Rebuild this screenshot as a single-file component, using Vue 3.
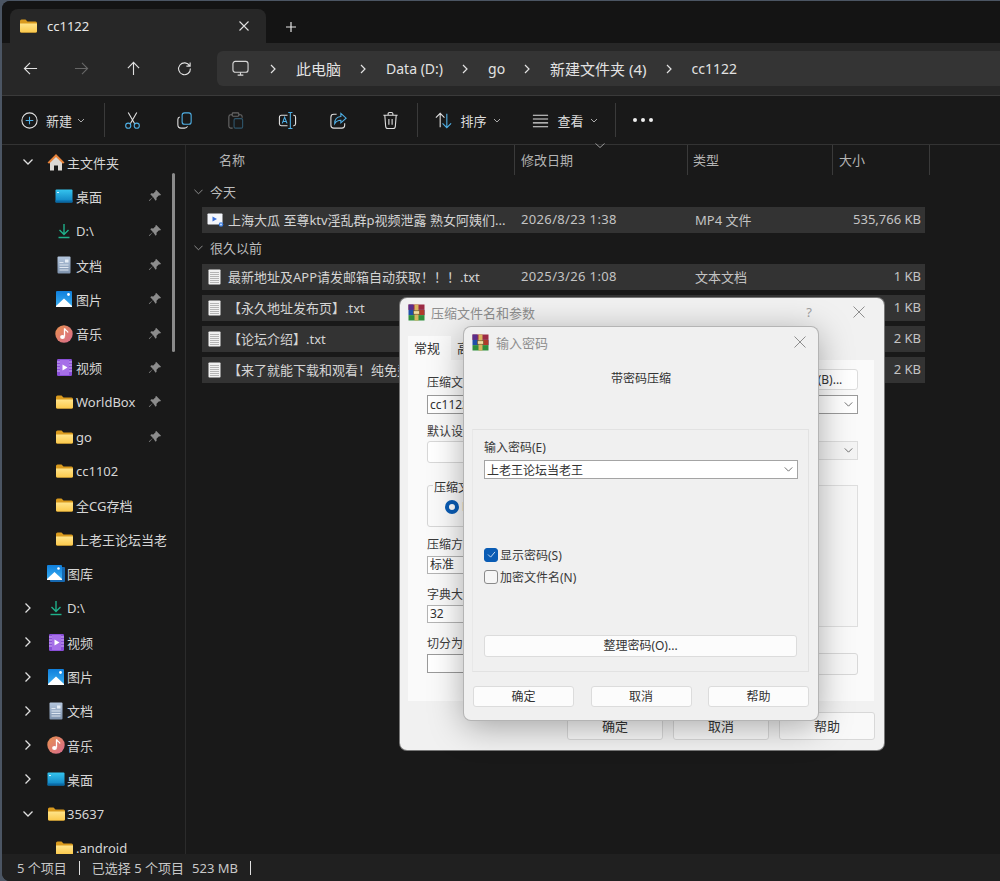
<template>
  <svg class="sprite" aria-hidden="true">
    <defs>
      <linearGradient id="gDesk" x1="0" y1="0" x2="0" y2="1"><stop offset="0" stop-color="#35c4ee" /><stop offset="1" stop-color="#0d7fc0" /></linearGradient>
      <linearGradient id="gDoc" x1="0" y1="0" x2="0" y2="1"><stop offset="0" stop-color="#b4c6de" /><stop offset="1" stop-color="#7f93ad" /></linearGradient>
      <linearGradient id="gPic" x1="0" y1="0" x2="0" y2="1"><stop offset="0" stop-color="#0f7fdc" /><stop offset="1" stop-color="#3cb0f2" /></linearGradient>
      <linearGradient id="gMusic" x1="0" y1="0" x2="1" y2="1"><stop offset="0" stop-color="#e8914e" /><stop offset="1" stop-color="#d76a8e" /></linearGradient>
      <linearGradient id="gFolder" x1="0" y1="0" x2="0" y2="1"><stop offset="0" stop-color="#ffe48a" /><stop offset="1" stop-color="#fbc94c" /></linearGradient>
    </defs>
    <symbol id="i-folder" viewBox="0 0 17 14">
      <path d="M0 2a1.5 1.5 0 0 1 1.5-1.5h4L7.5 2.500h8A1.500 1.500 0 0 1 17 4v8a1.500 1.500 0 0 1-1.500 1.500h-14A1.500 1.500 0 0 1 0 12z" fill="#d99a1e" />
      <path d="M0 4.500h17V12a1.500 1.500 0 0 1-1.500 1.500h-14A1.500 1.500 0 0 1 0 12z" fill="url(#gFolder)" />
    </symbol>
    <symbol id="i-home" viewBox="0 0 18 18">
      <path d="M3 8.500L9 3l6 5.500V17.500h-4v-5H7v5H3z" fill="#dcd9d5" />
      <path d="M0.500 9.500L9 1l8.500 8.500-1.600 1.200L9 3.900 2.100 10.700z" fill="#e8833a" />
    </symbol>
    <symbol id="i-desktop" viewBox="0 0 18 14">
      <rect x="0.500" y="0.500" width="17" height="13" rx="1" fill="url(#gDesk)" />
      <rect x="2" y="3" width="2" height="1" fill="#d5f3ff" />
      <rect x="0.500" y="11.500" width="17" height="2" fill="#0b6aa6" />
    </symbol>
    <symbol id="i-down" viewBox="0 0 16 16">
      <path d="M8 1v10M3.500 7L8 11.500 12.500 7" fill="none" stroke="#1fb08a" stroke-width="1.400" />
      <path d="M2.500 14.500h11" stroke="#1fb08a" stroke-width="1.400" />
    </symbol>
    <symbol id="i-doc" viewBox="0 0 14 18">
      <rect x="0.500" y="0.500" width="13" height="17" rx="1" fill="url(#gDoc)" />
      <path d="M2.500 9h9M2.500 11.500h9M2.500 14h9M2.500 6.500h4" stroke="#e6edf6" stroke-width="0.900" />
      <rect x="8" y="3.500" width="3.500" height="3" fill="#e6edf6" />
    </symbol>
    <symbol id="i-pic" viewBox="0 0 16 16">
      <rect width="16" height="16" rx="1" fill="url(#gPic)" />
      <path d="M0 15l8-7.500 8 7.500v1H0z" fill="#fff" />
      <circle cx="12.500" cy="3.500" r="1.400" fill="#fff" />
    </symbol>
    <symbol id="i-lib" viewBox="0 0 18 17">
      <rect x="3" y="2" width="15" height="15" rx="1" fill="#1668b0" />
      <rect x="0" y="0" width="15" height="15" rx="1" fill="url(#gPic)" />
      <path d="M0 14l7.500-7 7.500 7v1H0z" fill="#fff" />
      <circle cx="11.500" cy="3.500" r="1.300" fill="#fff" />
    </symbol>
    <symbol id="i-music" viewBox="0 0 18 18">
      <circle cx="9" cy="9" r="8.700" fill="url(#gMusic)" />
      <path d="M9.500 3.500v8" stroke="#fff" stroke-width="1.300" />
      <path d="M9.500 3.500c.5 2 3 2 3.500 4" fill="none" stroke="#fff" stroke-width="1.300" />
      <ellipse cx="7.500" cy="12" rx="2.400" ry="2" fill="#fff" />
    </symbol>
    <symbol id="i-video" viewBox="0 0 15 17">
      <rect width="15" height="17" rx="1.200" fill="#8a4fd8" />
      <rect x="3" y="1" width="9" height="15" fill="#a66fe8" />
      <path d="M0 3h3M0 6h3M0 9h3M0 12h3M12 3h3M12 6h3M12 9h3M12 12h3" stroke="#d9c2f6" stroke-width="0.900" />
      <path d="M5.500 5.500v6l5-3z" fill="#fff" />
    </symbol>
    <symbol id="i-pin" viewBox="0 0 14 14">
      <path d="M8.300 1l4.700 4.700-1 .8-1-.3-2.500 2.500.1 2-1 1L5 8.100l-3.500 4-.7-.7L4.900 8 2.300 5.300l1-1 2 .1 2.500-2.500-.3-1z" fill="#8c8c8c" />
    </symbol>
    <symbol id="i-txt" viewBox="0 0 13 16">
      <rect x="0.500" y="0.500" width="12" height="15" rx="0.800" fill="#f1f1f1" />
      <path d="M2 3.500h9M2 5.500h9M2 7.500h9M2 9.500h9M2 11.500h9M2 13.500h9" stroke="#a6a6a6" stroke-width="0.800" />
    </symbol>
    <symbol id="i-mp4" viewBox="0 0 17 14">
      <rect x="0.500" y="0.500" width="15" height="11" rx="0.800" fill="#f4f6fb" />
      <path d="M5.500 3.500v5l4.500-2.500z" fill="#3a6fd8" />
      <circle cx="14" cy="11.500" r="2.300" fill="#3f7fe0" />
      <circle cx="14" cy="11.500" r="1" fill="#cfe0fb" />
    </symbol>
    <symbol id="i-rar" viewBox="0 0 17 17">
      <rect x="0.500" y="0.500" width="16" height="5.400" fill="#9c2b45" />
      <rect x="0.500" y="0.500" width="5" height="5.400" fill="#5a2f8c" />
      <rect x="0.500" y="5.900" width="16" height="5.200" fill="#1f4fa8" />
      <rect x="11" y="5.900" width="5.500" height="5.200" fill="#b03a2a" />
      <rect x="0.500" y="11.100" width="16" height="5.400" fill="#2f8f3c" />
      <rect x="6.500" y="0.500" width="4" height="16" fill="#d8b45e" />
      <rect x="5.500" y="6.800" width="6" height="3.400" fill="#f0dca0" stroke="#6b4a1a" stroke-width="0.600" />
    </symbol>
  </svg>

  <div class="window">
    <div class="tabbar">
      <div class="tab">
        <svg class="tab-folder"><use href="#i-folder" /></svg>
        <span class="tab-title">cc1122</span>
        <svg class="tab-close" viewBox="0 0 10 10"><path d="M.5.500l9 9M9.500.500l-9 9" /></svg>
      </div>
      <svg class="tab-plus" viewBox="0 0 10 10"><path d="M5 0v10M0 5h10" /></svg>
    </div>

    <div class="navbar">
      <div class="nav-btns">
        <svg class="nav-icon" viewBox="0 0 16 16"><path d="M15 8H1.500M7.500 2l-6 6 6 6" /></svg>
        <svg class="nav-icon dim" viewBox="0 0 16 16"><path d="M1 8h13.500M8.500 2l6 6-6 6" /></svg>
        <svg class="nav-icon" viewBox="0 0 16 16"><path d="M8 15V1.500M2 7.500l6-6 6 6" /></svg>
        <svg class="nav-icon" viewBox="0 0 16 16"><path d="M13.500 5.200A6.300 6.300 0 1 0 14.300 8M14 1.500v4h-4" /></svg>
      </div>
      <div class="address">
        <svg class="pc-icon" viewBox="0 0 18 18"><rect x="1" y="1.500" width="16" height="11.500" rx="2.500" /><path d="M6 16h6M9 13v3" /></svg>
        <template v-for="crumb in crumbs" :key="crumb.text">
          <svg class="crumb-chev" viewBox="0 0 6 10"><path d="M1 1l4 4-4 4" /></svg>
          <span class="crumb" :class="{ latin: crumb.latin }">{{ crumb.text }}</span>
        </template>
      </div>
    </div>

    <div class="toolbar">
      <div class="tool-new">
        <svg class="tool-icon" viewBox="0 0 20 20"><circle cx="10" cy="10" r="8" /><path class="blue" d="M10 6v8M6 10h8" /></svg>
        <span>新建</span>
        <svg class="caret" viewBox="0 0 8 5"><path d="M1 1l3 3 3-3" /></svg>
      </div>
      <i class="tool-sep"></i>
      <div class="tool-btn first">
        <svg class="tool-icon" viewBox="0 0 20 20"><path d="M5.500 1.500l6.800 12M14.500 1.500l-6.800 12" /><circle class="blue" cx="5.500" cy="15.500" r="2.700" /><circle class="blue" cx="14.500" cy="15.500" r="2.700" /></svg>
      </div>
      <div class="tool-btn">
        <svg class="tool-icon" viewBox="0 0 20 20"><rect class="blue" x="7.500" y="2" width="9.500" height="12" rx="2.500" /><path d="M5 6.300C3.700 6.700 3 7.600 3 9v5.500C3 16.500 4.200 18 6.500 18H10c1.500 0 2.700-.7 3.200-1.800" /></svg>
      </div>
      <div class="tool-btn faded">
        <svg class="tool-icon" viewBox="0 0 20 20"><path d="M6.500 4H5C3.800 4 3 4.800 3 6v10c0 1.200.8 2 2 2h2M13.500 4H15c1.200 0 2 .8 2 2v1" /><rect x="6.500" y="2" width="7" height="3.500" rx="1" /><rect class="blue" x="8.500" y="8" width="9" height="10" rx="1.500" /></svg>
      </div>
      <div class="tool-btn">
        <svg class="tool-icon" viewBox="0 0 20 20"><path d="M10 4.500H3.500C2.200 4.500 1.500 5.200 1.500 6.500v7c0 1.300.7 2 2 2H10M16 4.500h.5c1.300 0 2 .7 2 2v7c0 1.300-.7 2-2 2H16" /><path class="blue" d="M4.500 13l2.500-6.500L9.500 13M5.300 11h3.400M13 1.500v17M10.800 1.500h4.400M10.800 18.500h4.400" /></svg>
      </div>
      <div class="tool-btn">
        <svg class="tool-icon" viewBox="0 0 20 20"><path d="M8 3.500H5C3 3.500 2 4.500 2 6.500V15c0 2 1 3 3 3h8.500c2 0 3-1 3-3v-2" /><path class="blue" d="M12.500 2.500L18 7.500l-5.500 5V9.800c-3 0-5 1-6.500 3.500 0-4.500 2.500-7.200 6.500-7.500z" /></svg>
      </div>
      <div class="tool-btn">
        <svg class="tool-icon" viewBox="0 0 20 20"><path d="M2.500 4.500h15M7.500 4.500V3c0-.8.500-1.500 1.500-1.500h2c1 0 1.500.7 1.500 1.500v1.500M4 4.500l.9 11.500c.1 1.500 1 2.500 2.500 2.500h5.200c1.500 0 2.400-1 2.500-2.500L16 4.500M8.300 8.500v6M11.700 8.500v6" /></svg>
      </div>
      <i class="tool-sep second"></i>
      <div class="tool-drop sort">
        <svg class="tool-icon" viewBox="0 0 20 20"><path d="M6.500 17V2.500M2 7l4.500-4.500L11 7" /><path class="blue" d="M13.500 3v14.500M9 13l4.500 4.500L18 13" /></svg>
        <span>排序</span>
        <svg class="caret" viewBox="0 0 8 5"><path d="M1 1l3 3 3-3" /></svg>
      </div>
      <div class="tool-drop view">
        <svg class="tool-icon" viewBox="0 0 20 20"><path d="M2 4.500h16M2 8.500h16M2 12.500h16M2 16.500h16" /></svg>
        <span>查看</span>
        <svg class="caret" viewBox="0 0 8 5"><path d="M1 1l3 3 3-3" /></svg>
      </div>
      <i class="tool-sep third"></i>
      <div class="dots"><i></i><i></i><i></i></div>
    </div>

    <div class="main">
      <aside class="sidebar">
        <div v-for="item in sideItems" :key="item.id" class="side-row" :class="{ child: item.child }">
          <span class="chev-box">
            <svg v-if="item.chev" class="side-chev" :class="item.chev" viewBox="0 0 12 12"><path :d="item.chev === 'open' ? 'M1.500 3.500L6 8l4.500-4.500' : 'M3.500 1.500L8 6l-4.500 4.500'" /></svg>
          </span>
          <span class="side-icon"><svg :style="{ width: item.w + 'px', height: item.h + 'px' }"><use :href="'#i-' + item.icon" /></svg></span>
          <span class="side-text">{{ item.name }}</span>
          <svg v-if="item.pin" class="pin"><use href="#i-pin" /></svg>
        </div>
        <div class="side-scroll"></div>
      </aside>

      <section class="files">
        <div class="col-head">
          <span class="col name-col">名称</span>
          <span class="col date-col">修改日期<svg class="sort-mark" viewBox="0 0 10 5"><path d="M.5.500L5 4.500 9.500.500" /></svg></span>
          <span class="col type-col">类型</span>
          <span class="col size-col">大小</span>
        </div>

        <div class="group-title first">
          <svg viewBox="0 0 10 6"><path d="M.5.500L5 5 9.500.500" /></svg>今天
        </div>
        <div class="file-row">
          <svg class="file-icon mp4"><use href="#i-mp4" /></svg>
          <span class="file-name">上海大瓜 至尊ktv淫乱群p视频泄露 熟女阿姨们...</span>
          <span class="file-date">2026/8/23 1:38</span>
          <span>MP4 文件</span>
          <span class="file-size">535,766 KB</span>
        </div>

        <div class="group-title">
          <svg viewBox="0 0 10 6"><path d="M.5.500L5 5 9.500.500" /></svg>很久以前
        </div>
        <div v-for="f in oldFiles" :key="f.name" class="file-row">
          <svg class="file-icon"><use href="#i-txt" /></svg>
          <span class="file-name">{{ f.name }}</span>
          <span class="file-date">{{ f.date }}</span>
          <span>{{ f.type }}</span>
          <span class="file-size">{{ f.size }}</span>
        </div>
      </section>
    </div>

    <div class="statusbar">
      <span>5 个项目</span>
      <i class="status-sep"></i>
      <span>已选择 5 个项目</span>
      <span class="status-size">523 MB</span>
      <i class="status-sep last"></i>
    </div>
  </div>

  <!-- 压缩文件名和参数 -->
  <div class="dialog dlg-back">
    <div class="dlg-title">
      <svg class="rar"><use href="#i-rar" /></svg>
      <span>压缩文件名和参数</span>
      <span class="help">?</span>
      <svg class="dlg-close" viewBox="0 0 12 12"><path d="M.5.500l11 11M11.500.500l-11 11" /></svg>
    </div>
    <div class="back-tabs">
      <span class="back-tab active">常规</span>
      <span class="back-tab">高级</span>
    </div>
    <div class="back-panel">
      <div class="back-left">
        <div class="lbl">压缩文件名(A)</div>
        <div class="field name-field">cc1122.rar</div>
        <div class="lbl gap-default">默认设置</div>
        <div class="soft-btn"></div>
        <div class="group-box">
          <span class="legend">压缩文件格式</span>
          <span class="radio"></span><span class="radio-text">RAR</span>
        </div>
        <div class="lbl gap-method">压缩方式(M)</div>
        <div class="field small-field">标准</div>
        <div class="lbl gap-dict">字典大小(I)</div>
        <div class="field small-field">32</div>
        <div class="lbl gap-dict">切分为分卷(V)</div>
        <div class="field split-field"></div>
      </div>
      <div class="back-right">
        <div class="browse">浏览(B)...</div>
        <div class="right-select strong">
          <svg class="sel-chev" viewBox="0 0 10 6"><path d="M.5.500L5 5 9.500.500" /></svg>
        </div>
        <div class="right-select second">
          <svg class="sel-chev" viewBox="0 0 10 6"><path d="M.5.500L5 5 9.500.500" /></svg>
        </div>
        <div class="opt-box"></div>
        <div class="bottom-box"></div>
      </div>
    </div>
    <div class="back-footer">
      <span class="back-btn">确定</span>
      <span class="back-btn">取消</span>
      <span class="back-btn">帮助</span>
    </div>
  </div>

  <!-- 输入密码 -->
  <div class="dialog dlg-front">
    <div class="dlg-title front-title">
      <svg class="rar"><use href="#i-rar" /></svg>
      <span>输入密码</span>
      <svg class="dlg-close" viewBox="0 0 12 12"><path d="M.5.500l11 11M11.500.500l-11 11" /></svg>
    </div>
    <div class="profile-name">带密码压缩</div>
    <div class="pwd-panel">
      <div class="lbl">输入密码(E)</div>
      <div class="pwd-input">
        <span>上老王论坛当老王</span>
        <svg class="sel-chev" viewBox="0 0 10 6"><path d="M.5.500L5 5 9.500.500" /></svg>
      </div>
      <div class="check-row show">
        <span class="check on"><svg viewBox="0 0 10 8"><path d="M1 4l3 3 5-6" /></svg></span>显示密码(S)
      </div>
      <div class="check-row">
        <span class="check"></span>加密文件名(N)
      </div>
      <div class="wide-btn">整理密码(O)...</div>
    </div>
    <div class="front-footer">
      <span class="front-btn">确定</span>
      <span class="front-btn">取消</span>
      <span class="front-btn">帮助</span>
    </div>
  </div>
</template>

<script setup>
const crumbs = [
  { text: '此电脑' },
  { text: 'Data (D:)', latin: true },
  { text: 'go', latin: true },
  { text: '新建文件夹 (4)' },
  { text: 'cc1122', latin: true }
]

const sideItems = [
  { id: 1, name: '主文件夹', icon: 'home', w: 18, h: 18, chev: 'open' },
  { id: 2, name: '桌面', icon: 'desktop', w: 18, h: 14, child: true, pin: true },
  { id: 3, name: 'D:\\', icon: 'down', w: 16, h: 16, child: true, pin: true },
  { id: 4, name: '文档', icon: 'doc', w: 14, h: 18, child: true, pin: true },
  { id: 5, name: '图片', icon: 'pic', w: 16, h: 16, child: true, pin: true },
  { id: 6, name: '音乐', icon: 'music', w: 18, h: 18, child: true, pin: true },
  { id: 7, name: '视频', icon: 'video', w: 15, h: 17, child: true, pin: true },
  { id: 8, name: 'WorldBox', icon: 'folder', w: 17, h: 14, child: true, pin: true },
  { id: 9, name: 'go', icon: 'folder', w: 17, h: 14, child: true, pin: true },
  { id: 10, name: 'cc1102', icon: 'folder', w: 17, h: 14, child: true },
  { id: 11, name: '全CG存档', icon: 'folder', w: 17, h: 14, child: true },
  { id: 12, name: '上老王论坛当老', icon: 'folder', w: 17, h: 14, child: true },
  { id: 13, name: '图库', icon: 'lib', w: 18, h: 17 },
  { id: 14, name: 'D:\\', icon: 'down', w: 16, h: 16, chev: 'closed' },
  { id: 15, name: '视频', icon: 'video', w: 15, h: 17, chev: 'closed' },
  { id: 16, name: '图片', icon: 'pic', w: 16, h: 16, chev: 'closed' },
  { id: 17, name: '文档', icon: 'doc', w: 14, h: 18, chev: 'closed' },
  { id: 18, name: '音乐', icon: 'music', w: 18, h: 18, chev: 'closed' },
  { id: 19, name: '桌面', icon: 'desktop', w: 18, h: 14, chev: 'closed' },
  { id: 20, name: '35637', icon: 'folder', w: 17, h: 14, chev: 'open' },
  { id: 21, name: '.android', icon: 'folder', w: 17, h: 14, child: true }
]

const oldFiles = [
  { name: '最新地址及APP请发邮箱自动获取！！！.txt', date: '2025/3/26 1:08', type: '文本文档', size: '1 KB' },
  { name: '【永久地址发布页】.txt', date: '2025/3/26 1:08', type: '文本文档', size: '1 KB' },
  { name: '【论坛介绍】.txt', date: '2025/3/26 1:08', type: '文本文档', size: '2 KB' },
  { name: '【来了就能下载和观看！纯免费】.txt', date: '2025/3/26 1:08', type: '文本文档', size: '2 KB' }
]
</script>

<style>
html, body {
  margin: 0;
  height: 881px;
  overflow: hidden;
  background: #4b5563;
}
</style>

<style scoped>
.sprite {
  position: absolute;
  width: 0;
  height: 0;
}

.window {
  position: relative;
  box-sizing: border-box;
  width: 998px;
  height: 880px;
  margin: 1px 0 0 2px;
  border-radius: 8px 0 0 8px;
  overflow: hidden;
  display: flex;
  flex-direction: column;
  background: #191919;
  color: #dcdcdc;
  font: 13px "Noto Sans", "Noto Sans CJK SC", sans-serif;
}

/* tab strip */
.tabbar {
  height: 42px;
  flex: none;
  box-sizing: border-box;
  padding: 8px 0 0 8px;
  display: flex;
  background: #141414;
}
.tab {
  width: 256px;
  height: 34px;
  box-sizing: border-box;
  padding-left: 10px;
  display: flex;
  align-items: center;
  background: #272727;
  border-radius: 8px 8px 0 0;
}
.tab-folder {
  width: 17px;
  height: 14px;
}
.tab-title {
  margin-left: 10px;
  flex: 1;
  color: #e6e6e6;
}
.tab-close {
  width: 10px;
  height: 10px;
  margin-right: 17px;
  fill: none;
  stroke: #e0e0e0;
  stroke-width: 1.100;
}
.tab-plus {
  width: 10px;
  height: 10px;
  margin: 13px 0 0 20px;
  fill: none;
  stroke: #e6e6e6;
  stroke-width: 1.200;
}

/* nav + address */
.navbar {
  height: 53px;
  flex: none;
  box-sizing: border-box;
  padding-top: 8px;
  display: flex;
  background: #272727;
  border-bottom: 1px solid #3a3a3a;
}
.nav-btns {
  width: 215px;
  height: 35px;
  flex: none;
  display: flex;
  align-items: center;
  padding-left: 20.500px;
  box-sizing: border-box;
  gap: 36.500px;
}
.nav-icon {
  width: 15px;
  height: 15px;
  fill: none;
  stroke: #e0e0e0;
  stroke-width: 1.200;
}
.nav-icon.dim {
  stroke: #666;
}
.address {
  flex: 1;
  height: 35px;
  display: flex;
  align-items: center;
  background: #343434;
  border-radius: 6px 0 0 6px;
  font-size: 15px;
  color: #e2e2e2;
}
.pc-icon {
  width: 17px;
  height: 17px;
  margin: 0 2px 0 15px;
  fill: none;
  stroke: #d8d8d8;
  stroke-width: 1.200;
}
.crumb-chev {
  width: 6px;
  height: 10px;
  margin: 0 20px 0 19px;
  fill: none;
  stroke: #e2e2e2;
  stroke-width: 1.200;
}
.crumb.latin {
  font-size: 14px;
}

/* command bar */
.toolbar {
  height: 49px;
  flex: none;
  display: flex;
  align-items: center;
  background: #191919;
  border-bottom: 1px solid #333;
  box-sizing: border-box;
}
.tool-icon {
  width: 19px;
  height: 19px;
  fill: none;
  stroke: #e0e0e0;
  stroke-width: 1.150;
}
.tool-icon .blue {
  stroke: #4fb0e6;
}
.tool-new {
  width: 102px;
  box-sizing: border-box;
  padding-left: 18px;
  display: flex;
  align-items: center;
  gap: 7px;
}
.caret {
  width: 8px;
  height: 5px;
  margin-left: -2px;
  fill: none;
  stroke: #aaa;
}
.tool-sep {
  width: 1px;
  height: 34px;
  background: #3a3a3a;
  flex: none;
}
.tool-btn {
  width: 51.500px;
  display: flex;
  justify-content: center;
  flex: none;
}
.tool-btn.first {
  margin-left: 2px;
}
.tool-btn.faded {
  opacity: 0.400;
}
.tool-sep.second {
  margin-left: 0.500px;
}
.tool-drop {
  display: flex;
  align-items: center;
  gap: 8px;
  margin-left: 16px;
}
.tool-drop.view {
  margin-left: 30px;
}
.tool-sep.third {
  margin-left: 17px;
}
.dots {
  margin-left: 17px;
  display: flex;
  gap: 4px;
}
.dots i {
  width: 4px;
  height: 4px;
  border-radius: 50%;
  background: #eee;
}

/* body */
.main {
  flex: 1;
  min-height: 0;
  display: flex;
}
.sidebar {
  position: relative;
  width: 183px;
  flex: none;
  overflow: hidden;
  border-right: 1px solid #2b2b2b;
}
.side-row {
  height: 34.300px;
  box-sizing: border-box;
  padding-left: 18px;
  display: flex;
  align-items: center;
  color: #d6d6d6;
}
.chev-box {
  width: 16px;
  display: flex;
  justify-content: center;
  flex: none;
}
.side-chev {
  width: 12px;
  height: 12px;
  fill: none;
  stroke: #e0e0e0;
  stroke-width: 1.300;
}
.side-icon {
  width: 18px;
  margin-left: 11px;
  display: flex;
  justify-content: center;
  align-items: center;
  flex: none;
}
.side-icon svg {
  display: block;
}
.side-text {
  margin-left: 2px;
  white-space: nowrap;
}
.side-row.child .side-icon {
  margin-left: 19px;
}
.side-row.child .side-text {
  margin-left: 3px;
}
.pin {
  position: absolute;
  left: 146px;
  width: 14px;
  height: 14px;
}
.side-scroll {
  position: absolute;
  left: 170px;
  top: 28px;
  width: 3px;
  height: 179px;
  border-radius: 2px;
  background: #8a8a8a;
}

/* details view */
.files {
  flex: 1;
  position: relative;
  box-sizing: border-box;
  padding-left: 16px;
  min-width: 0;
}
.col-head {
  height: 30px;
  display: flex;
  color: #b4b4b4;
  line-height: 30px;
}
.col {
  position: relative;
  box-sizing: border-box;
  padding-left: 6px;
  border-right: 1px solid #3a3a3a;
}
.name-col {
  width: 313px;
  padding-left: 17px;
}
.date-col {
  width: 173px;
}
.type-col {
  width: 145px;
  padding-left: 5px;
}
.size-col {
  width: 97px;
}
.sort-mark {
  position: absolute;
  left: 80px;
  top: -2px;
  width: 10px;
  height: 5px;
  fill: none;
  stroke: #999;
}
.group-title {
  height: 16px;
  margin-top: 7px;
  display: flex;
  align-items: center;
  color: #bdbdbd;
  line-height: 16px;
}
.group-title.first {
  margin-top: 9px;
}
.group-title svg {
  width: 9px;
  height: 6px;
  margin: 0 7px 0 -8px;
  fill: none;
  stroke: #999;
}
.file-row {
  width: 723px;
  height: 26px;
  margin-top: 5px;
  display: grid;
  grid-template-columns: 319px 174px 1fr auto;
  align-items: center;
  box-sizing: border-box;
  padding: 0 4px 2px 0;
  background: #333;
  color: #c4c4c4;
  position: relative;
}
.group-title + .file-row {
  margin-top: 7px;
}
.group-title:not(.first) + .file-row {
  margin-top: 8px;
}
.file-name {
  padding-left: 26px;
  white-space: nowrap;
  color: #d4d4d4;
  overflow: hidden;
}
.file-date {
  letter-spacing: 0.350px;
}
.file-icon {
  position: absolute;
  left: 6px;
  top: 5px;
  width: 13px;
  height: 16px;
}
.file-icon.mp4 {
  left: 5px;
  top: 6px;
  width: 17px;
  height: 14px;
}
.file-size {
  text-align: right;
}

.statusbar {
  height: 27px;
  flex: none;
  display: flex;
  align-items: center;
  box-sizing: border-box;
  padding-left: 15px;
  background: #202020;
  color: #c8c8c8;
}
.status-sep {
  width: 1px;
  height: 14px;
  margin: 0 12px;
  background: #e0e0e0;
}
.status-size {
  margin-left: 8px;
}

/* dialogs */
.dialog {
  position: absolute;
  box-sizing: border-box;
  display: flex;
  flex-direction: column;
  border-radius: 7px;
  color: #333;
  font: 12px "Noto Sans", "Noto Sans CJK SC", sans-serif;
}
.dlg-back {
  left: 400px;
  top: 298px;
  width: 484px;
  height: 452px;
  background: #f1f1f1;
  box-shadow: 0 0 0 1px #777;
}
.dlg-front {
  left: 464px;
  top: 327px;
  width: 354px;
  height: 393px;
  background: #f0f0f0;
  box-shadow: 0 0 0 1px #b4b4b4, 0 6px 34px rgba(0, 0, 0, 0.340);
}
.dlg-title {
  height: 28px;
  flex: none;
  padding-left: 8px;
  display: flex;
  align-items: center;
  font-size: 13px;
  color: #8e8e8e;
}
.rar {
  width: 17px;
  height: 17px;
  margin-right: 6px;
}
.help {
  margin-left: auto;
  margin-right: 41px;
  font-size: 13px;
  color: #a0a0a0;
}
.dlg-close {
  width: 12px;
  height: 12px;
  margin-right: 19px;
  fill: none;
  stroke: #8e8e8e;
  stroke-width: 1;
}
.front-title {
  height: 30px;
  padding-left: 8px;
}
.front-title .rar {
  margin-right: 7px;
}
.front-title .dlg-close {
  margin-left: auto;
  margin-right: 12px;
}
.back-tabs {
  height: 34px;
  flex: none;
  padding-left: 8px;
  display: flex;
  align-items: flex-end;
}
.back-tab {
  height: 24px;
  padding: 0 13px 0 6px;
  font-size: 13px;
  line-height: 24px;
  color: #333;
}
.back-tab.active {
  background: #fafafa;
  width: 37px;
  padding-right: 0;
  box-sizing: content-box;
}
.back-panel {
  height: 341px;
  flex: none;
  margin: 0 10px 0 8px;
  box-sizing: border-box;
  padding: 9px 16px 0 19px;
  display: flex;
  justify-content: space-between;
  background: #fafafa;
}
.back-left {
  width: 210px;
  padding-top: 6px;
}
.lbl {
  height: 16px;
  line-height: 16px;
  white-space: nowrap;
  color: #3a3a3a;
}
.field {
  box-sizing: border-box;
  border: 1px solid #9a9a9a;
  background: #fff;
  padding-left: 2px;
  line-height: 17px;
}
.name-field {
  height: 19px;
  margin-top: 4px;
}
.gap-default {
  margin-top: 10px;
}
.soft-btn {
  height: 22px;
  margin-top: 1px;
  border: 1px solid #d8d8d8;
  border-radius: 3px;
  background: #fff;
  box-sizing: border-box;
}
.group-box {
  position: relative;
  height: 42px;
  margin-top: 22px;
  border: 1px solid #d6d6d6;
  border-radius: 3px;
  box-sizing: border-box;
}
.legend {
  position: absolute;
  left: 5px;
  top: -6px;
  padding: 0 1px;
  background: #fafafa;
  white-space: nowrap;
  line-height: 16px;
}
.radio {
  position: absolute;
  left: 17px;
  top: 14px;
  width: 14px;
  height: 14px;
  box-sizing: border-box;
  border: 4px solid #0a5cb4;
  border-radius: 50%;
  background: #fff;
}
.radio-text {
  position: absolute;
  left: 34px;
  top: 12px;
}
.gap-method {
  margin-top: 10px;
}
.small-field {
  height: 18px;
  margin-top: 3px;
  line-height: 16px;
  border-color: #b4b4b4;
}
.gap-dict {
  margin-top: 13px;
}
.gap-dict + .small-field {
  margin-top: 2px;
}
.split-field {
  height: 19px;
  margin-top: 2px;
}
.back-right {
  width: 88px;
  display: flex;
  flex-direction: column;
  align-items: flex-end;
}
.browse {
  width: 88px;
  height: 21px;
  flex: none;
  line-height: 19px;
  text-align: center;
  border: 1px solid #dcdcdc;
  border-radius: 3px;
  background: #fff;
  box-sizing: border-box;
  padding-left: 8px;
  white-space: nowrap;
}
.right-select {
  position: relative;
  width: 88px;
  height: 19px;
  margin-top: 5px;
  flex: none;
  display: flex;
  align-items: center;
  justify-content: flex-end;
  box-sizing: border-box;
  padding-right: 4px;
  background: #f4f4f4;
  border: 1px solid #dcdcdc;
}
.right-select.strong {
  border-color: #9a9a9a;
  background: #fff;
}
.right-select.second {
  margin-top: 27px;
}
.sel-chev {
  width: 9px;
  height: 5px;
  fill: none;
  stroke: #555;
}
.opt-box {
  width: 88px;
  height: 142px;
  margin-top: 25px;
  flex: none;
  box-sizing: border-box;
  border: 1px solid #dedede;
  background: #f7f7f7;
}
.bottom-box {
  width: 88px;
  height: 22px;
  margin-top: 26px;
  flex: none;
  box-sizing: border-box;
  border: 1px solid #d8d8d8;
  border-radius: 3px;
  background: #f8f8f8;
}
.back-footer {
  display: flex;
  justify-content: flex-end;
  gap: 10px;
  margin-top: 11px;
  padding-right: 9px;
}
.back-btn {
  width: 96px;
  height: 28px;
  line-height: 26px;
  text-align: center;
  font-size: 13px;
  box-sizing: border-box;
  border: 1px solid #d8d8d8;
  border-radius: 3px;
  background: #f9f9f9;
}

/* password dialog */
.profile-name {
  margin-top: 14px;
  height: 16px;
  line-height: 16px;
  text-align: center;
}
.pwd-panel {
  height: 243px;
  margin: 42px 9px 0 8px;
  box-sizing: border-box;
  padding: 10px 10px 0 11px;
  border: 1px solid #e2e2e2;
  border-left: 1px solid #e8e8e8;
  display: flex;
  flex-direction: column;
  background: #f0f0f0;
}
.pwd-input {
  height: 19px;
  margin-top: 4px;
  flex: none;
  display: flex;
  align-items: center;
  justify-content: space-between;
  box-sizing: border-box;
  border: 1px solid #a4a4a4;
  background: #fff;
  padding: 0 4px 0 2px;
}
.check-row {
  margin-top: 7px;
  height: 15px;
  display: flex;
  align-items: center;
  gap: 2px;
  flex: none;
  color: #3a3a3a;
}
.check-row.show {
  margin-top: 68px;
}
.check {
  width: 14px;
  height: 14px;
  box-sizing: border-box;
  border: 1px solid #8a8a8a;
  border-radius: 3px;
  background: #f6f6f6;
  display: flex;
  align-items: center;
  justify-content: center;
}
.check.on {
  background: #0a5cb4;
  border-color: #0a5cb4;
}
.check svg {
  width: 9px;
  height: 7px;
  fill: none;
  stroke: #dbe9f8;
  stroke-width: 1;
}
.wide-btn {
  width: 313px;
  height: 22px;
  margin-top: 51px;
  flex: none;
  line-height: 20px;
  text-align: center;
  box-sizing: border-box;
  border: 1px solid #dcdcdc;
  border-radius: 3px;
  background: #fcfcfc;
}
.front-footer {
  display: flex;
  gap: 16.500px;
  margin: 14px 0 0 9px;
}
.front-btn {
  width: 101px;
  height: 21px;
  line-height: 19px;
  text-align: center;
  box-sizing: border-box;
  border: 1px solid #dcdcdc;
  border-radius: 3px;
  background: #fcfcfc;
}
</style>
